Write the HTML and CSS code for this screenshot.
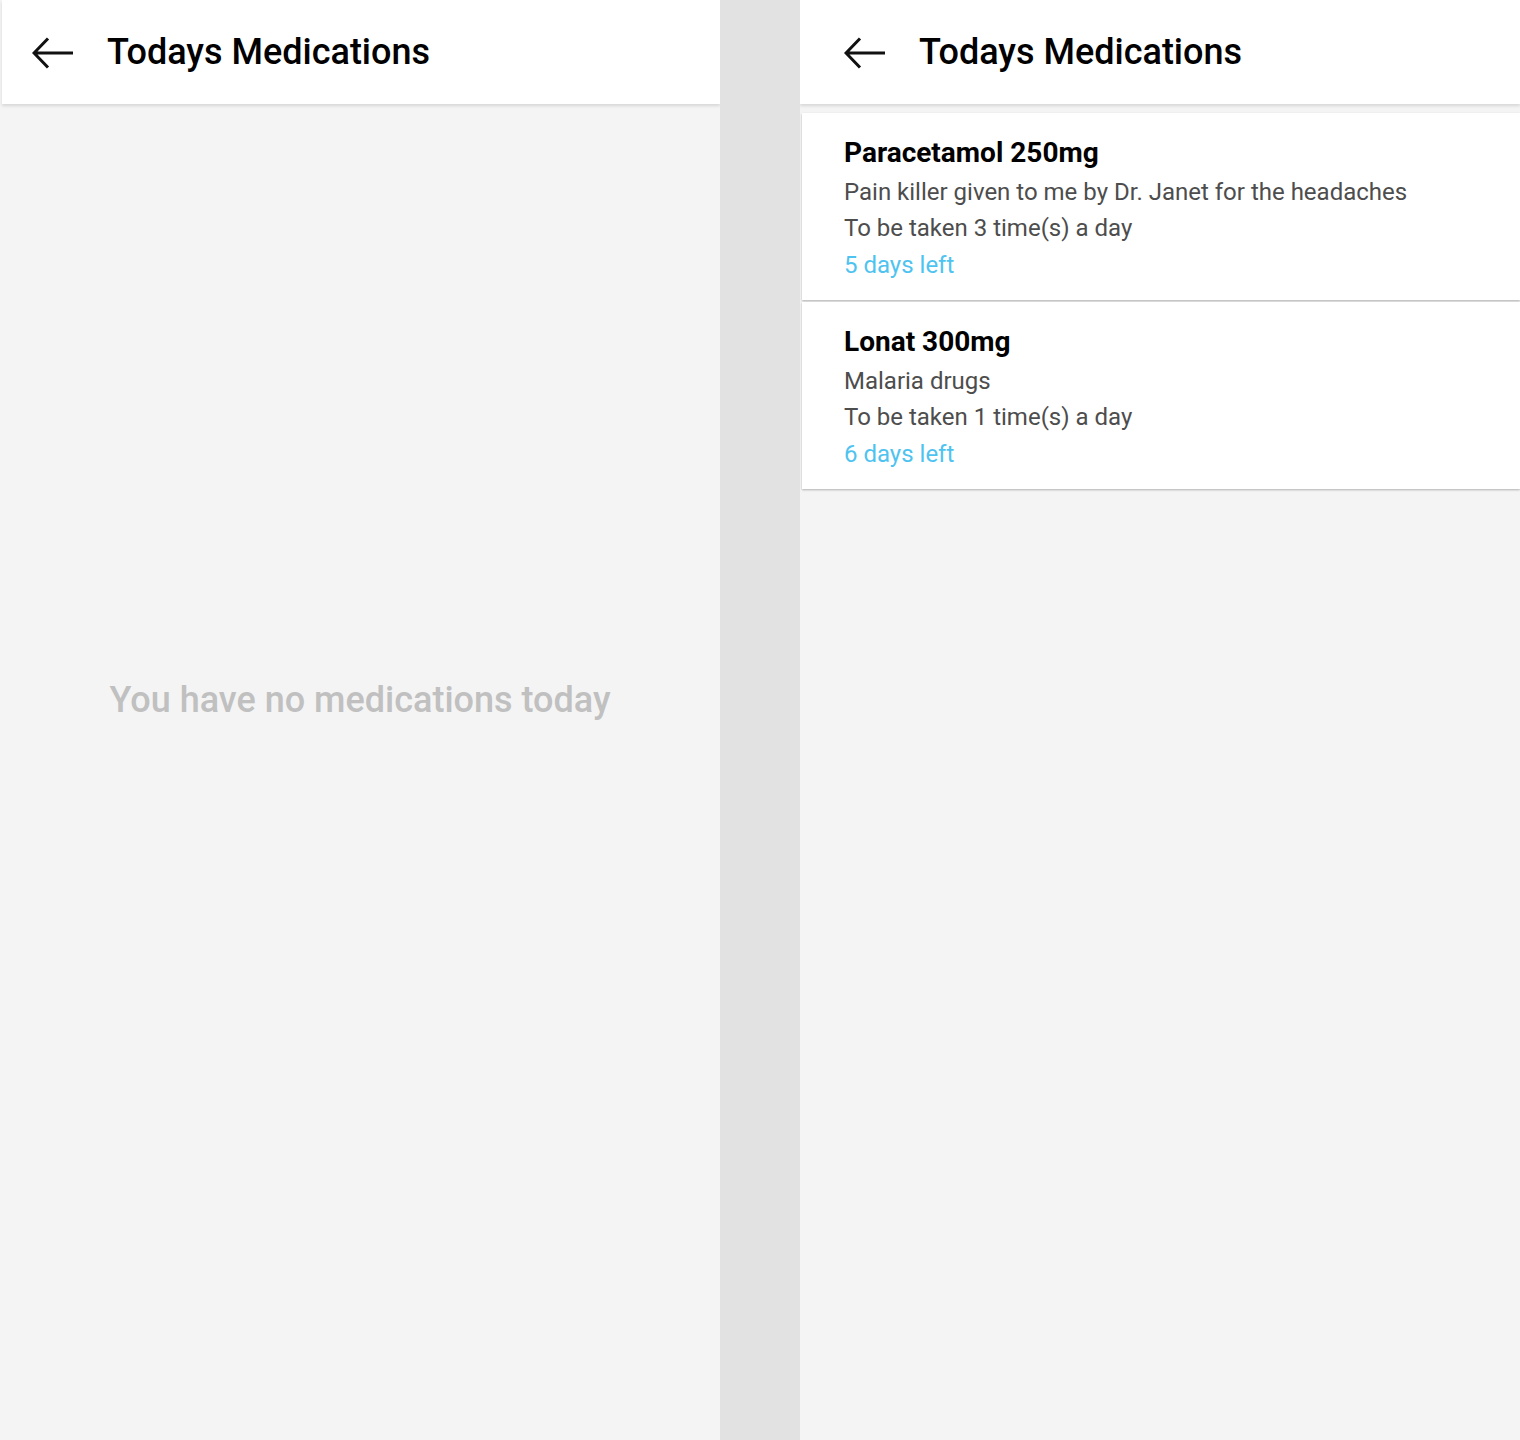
FILE: index.html
```html
<!DOCTYPE html>
<html>
<head>
<meta charset="utf-8">
<link rel="stylesheet" href="styles.css">
</head>
<body>
<div class="screens">
  <section class="screen screen-left">
    <header class="appbar">
      <svg class="back" width="42" height="34" viewBox="0 0 42 34"><path d="M2 17H41M16 2.5L2 17L16 31.5" fill="none" stroke="#111" stroke-width="3" stroke-linejoin="miter"/></svg>
      <h1 class="title">Todays Medications</h1>
    </header>
    <main class="empty">
      <p class="empty-text">You have no medications today</p>
    </main>
  </section>
  <div class="divider"></div>
  <section class="screen screen-right">
    <header class="appbar">
      <svg class="back" width="42" height="34" viewBox="0 0 42 34"><path d="M2 17H41M16 2.5L2 17L16 31.5" fill="none" stroke="#111" stroke-width="3" stroke-linejoin="miter"/></svg>
      <h1 class="title">Todays Medications</h1>
    </header>
    <main class="list">
      <article class="card">
        <h2 class="med-name">Paracetamol 250mg</h2>
        <p class="med-line">Pain killer given to me by Dr. Janet for the headaches</p>
        <p class="med-line">To be taken 3 time(s) a day</p>
        <p class="med-days">5 days left</p>
      </article>
      <article class="card">
        <h2 class="med-name">Lonat 300mg</h2>
        <p class="med-line">Malaria drugs</p>
        <p class="med-line">To be taken 1 time(s) a day</p>
        <p class="med-days">6 days left</p>
      </article>
    </main>
  </section>
</div>
</body>
</html>
```
FILE: styles.css
```css
html, body {
  margin: 0;
  padding: 0;
}
body {
  font-family: Roboto, "Noto Sans", "Liberation Sans", sans-serif;
  background: #e2e2e2;
}
.screens {
  display: flex;
  height: 1440px;
  width: 1520px;
}
.screen {
  width: 720px;
  background: #f4f4f4;
  display: flex;
  flex-direction: column;
  overflow: hidden;
}
.divider {
  width: 80px;
  background: #e2e2e2;
}
.appbar {
  height: 104px;
  background: #fff;
  display: flex;
  align-items: center;
  box-shadow: 0 2px 3px rgba(0,0,0,0.12);
  position: relative;
  z-index: 1;
  flex-shrink: 0;
}
.screen-left .appbar {
  margin-left: 2px;
  padding-left: 30px;
}
.screen-right .appbar {
  padding-left: 44px;
}
.back {
  display: block;
  margin-top: 1px;
}
.title {
  margin: 0 0 0 33px;
  font-size: 36px;
  font-weight: 500;
  color: #000;
  letter-spacing: 0;
}
.empty {
  flex: 1;
  display: flex;
  align-items: center;
  justify-content: center;
  padding-bottom: 145px;
}
.empty-text {
  margin: 0;
  font-size: 36px;
  font-weight: 500;
  color: #c0c0c0;
}
.list {
  display: flex;
  flex-direction: column;
  gap: 2px;
  padding: 9px 0 0 2px;
}
.card {
  background: #fff;
  padding: 22px 42px 17px 42px;
  box-shadow: 0 1px 2px rgba(0,0,0,0.28);
}
.med-name {
  margin: 0 0 3px 0;
  font-size: 28px;
  line-height: 36px;
  font-weight: 700;
  color: #000;
}
.med-line {
  margin: 0;
  font-size: 24px;
  line-height: 36px;
  color: #4d4d4d;
}
.med-days {
  margin: 1px 0 0 0;
  font-size: 24px;
  line-height: 36px;
  color: #4fc3f0;
}
```
